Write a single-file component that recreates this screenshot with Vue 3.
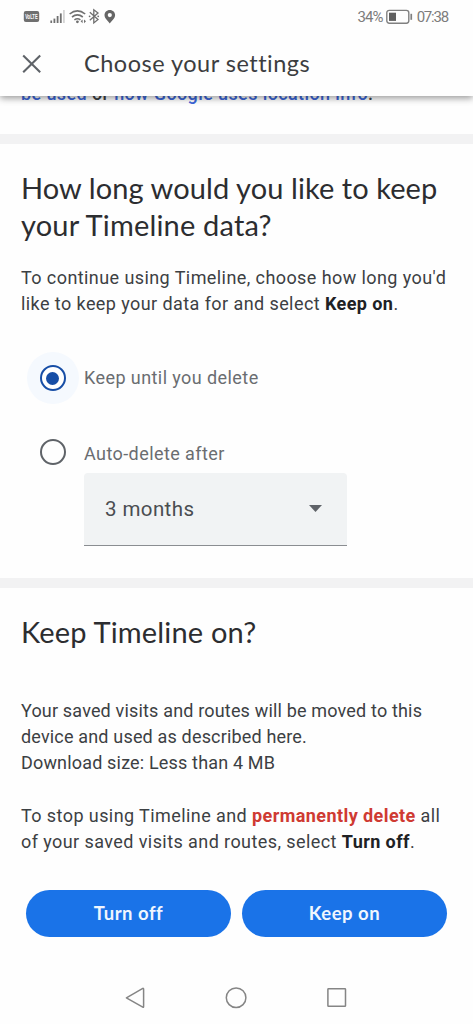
<script setup>
import { ref } from 'vue'

const retention = ref('keep')
</script>

<template>
  <div class="screen">
    <header class="top">
      <div class="status">
        <svg class="status-icons" width="96" height="22" viewBox="0 0 96 22">
          <rect x="1.8" y="5" width="15.4" height="11" rx="2" fill="#707070" />
          <text x="9.4" y="13.4" text-anchor="middle" textLength="12.5" lengthAdjust="spacingAndGlyphs" class="volte">VoLTE</text>
          <g fill="#707070">
            <rect x="28.4" y="14.5" width="1.7" height="2.5" />
            <rect x="31.5" y="12.6" width="1.8" height="4.4" />
            <rect x="34.7" y="10" width="1.8" height="7" />
            <rect x="37.9" y="7.4" width="1.8" height="9.6" />
            <rect x="41" y="4" width="1.8" height="13" fill="#d4d4d4" />
          </g>
          <g fill="none" stroke="#707070" stroke-width="1.6">
            <path d="M47.6 8 Q55.4 1.6 63.2 8" />
            <path d="M50 11 Q55.4 6.8 60.8 11" />
            <path d="M52.4 13.8 Q55.4 11.8 58.4 13.8" />
          </g>
          <circle cx="55.4" cy="15.8" r="1.4" fill="#707070" />
          <path d="M60.6 13.4 L58.6 15.3 L60.6 17.2 Z M62 13.4 L64 15.3 L62 17.2 Z" fill="#707070" />
          <path d="M67.8 6.3 L76 13.6 L71.8 17 V3.8 L76 7 L67.8 14.3" fill="none" stroke="#707070" stroke-width="1.3" />
          <circle cx="67.6" cy="10.3" r="0.9" fill="#707070" />
          <circle cx="76.2" cy="10.3" r="0.9" fill="#707070" />
          <path fill="#666" fill-rule="evenodd" d="M87.8 3.9 C84.6 3.9 82.5 6.2 82.5 9.1 C82.5 12.5 86 15 87.8 17.5 C89.6 15 93.1 12.5 93.1 9.1 C93.1 6.2 91 3.9 87.8 3.9 Z M87.8 7 A2.1 2.1 0 1 1 87.8 11.2 A2.1 2.1 0 1 1 87.8 7 Z" />
        </svg>
        <div class="status-right">
          <span class="pct">34%</span>
          <svg width="27" height="16" viewBox="0 0 27 16">
            <rect x="0.8" y="1.4" width="22" height="12.8" rx="2.4" fill="none" stroke="#808080" stroke-width="1.4" />
            <rect x="3" y="3.7" width="7" height="8.2" fill="#606060" />
            <rect x="24.4" y="4.8" width="1.7" height="6" fill="#808080" />
          </svg>
          <span class="clock">07:38</span>
        </div>
      </div>
      <div class="titlebar">
        <svg class="close" width="20" height="20" viewBox="0 0 20 20">
          <path d="M1.2 1.6 L18.2 18.2 M18.2 1.6 L1.2 18.2" stroke="#5f6368" stroke-width="2.1" fill="none" />
        </svg>
        <h1>Choose your settings</h1>
      </div>
    </header>

    <main>
      <section class="intro">
        <p class="line l0"><a>be used</a> or <a>how Google uses location info</a>.</p>
      </section>

      <section class="timeline">
        <h2><span class="line h-a">How long would you like to keep</span><span class="line h-b">your Timeline data?</span></h2>
        <p class="body">
          <span class="line">To continue using Timeline, choose how long you'd</span>
          <span class="line">like to keep your data for and select <b>Keep on</b>.</span>
        </p>

        <div class="option first" @click="retention = 'keep'">
          <span class="halo" :class="{ active: retention === 'keep' }"><span class="radio"></span></span>
          <span class="label">Keep until you delete</span>
        </div>
        <div class="option second" @click="retention = 'auto'">
          <span class="halo" :class="{ active: retention === 'auto' }"><span class="radio"></span></span>
          <span class="label">Auto-delete after</span>
        </div>
        <div class="select">
          <span>3 months</span>
          <svg width="13" height="7" viewBox="0 0 13 7"><path d="M0 0 H13 L6.5 7 Z" fill="#5f6368" /></svg>
        </div>
      </section>

      <section class="confirm">
        <h2><span class="line h-c">Keep Timeline on?</span></h2>
        <p class="body snug">
          <span class="line">Your saved visits and routes will be moved to this</span>
          <span class="line">device and used as described here.</span>
          <span class="line">Download size: Less than 4 MB</span>
        </p>
        <p class="body">
          <span class="line">To stop using Timeline and <b class="danger">permanently delete</b> all</span>
          <span class="line">of your saved visits and routes, select <b>Turn off</b>.</span>
        </p>
        <div class="actions">
          <button>Turn off</button>
          <button>Keep on</button>
        </div>
      </section>
    </main>

    <nav class="system-nav">
      <svg width="212" height="24" viewBox="0 0 212 24" fill="none" stroke="#858585" stroke-width="1.5" stroke-linejoin="round">
        <path d="M1.4 11.8 L17.8 2.4 Q18.6 2.2 18.6 3.2 V20.6 Q18.6 21.7 17.8 21.2 Z" />
        <circle cx="111.1" cy="11.7" r="9.8" />
        <rect x="202.9" y="2.7" width="17.6" height="17.6" rx="0.6" />
      </svg>
    </nav>
  </div>
</template>

<style>
body {
  margin: 0;
  background: #fefefe;
}
</style>

<style scoped>
.screen {
  width: 473px;
  height: 1024px;
  overflow: hidden;
  display: flex;
  flex-direction: column;
  background: #fefefe;
  color: #3c4043;
  font-family: Roboto, "Liberation Sans", sans-serif;
  font-size: 18px;
  line-height: 26.3px;
}
.top {
  height: 96px;
  flex: none;
  position: relative;
  z-index: 1;
  background: #fefefe;
  box-shadow: 0 2px 7px rgba(0, 0, 0, 0.42);
}
.status {
  display: flex;
  justify-content: space-between;
  padding: 6px 25px 0 22px;
  height: 28px;
  box-sizing: border-box;
}
.volte {
  font: 700 7px "Liberation Sans", sans-serif;
  fill: #fff;
}
.status-right {
  display: flex;
  align-items: center;
  height: 22px;
  font-size: 15px;
  color: #7c7c7c;
}
.status-right svg {
  margin: 0 4px 0 3px;
}
.pct {
  letter-spacing: -0.9px;
}
.clock {
  letter-spacing: -1.2px;
}
.titlebar {
  display: flex;
  align-items: center;
  height: 68px;
  padding-left: 22px;
}
.close {
  margin-top: 4px;
}
h1 {
  margin: 2px 0 0 42px;
  font: 400 23.5px/30px Lato, sans-serif;
  letter-spacing: 0.5px;
  color: #3c3d40;
  white-space: nowrap;
}
p, h2 {
  margin: 0;
}
.line {
  display: block;
  white-space: nowrap;
}
section {
  padding: 0 21px;
}
.intro {
  margin-top: -14.6px;
  height: 52.6px;
}
.l0 {
  font-weight: 500;
  letter-spacing: 0.39px;
}
a {
  color: #3b66d9;
}
.timeline {
  box-sizing: border-box;
  height: 454px;
  padding-top: 26px;
  border-top: 10px solid #f2f2f3;
  border-bottom: 10px solid #f2f2f3;
}
h2 {
  font: 400 29px/36.8px Lato, sans-serif;
  color: #2c2d30;
}
.h-a {
  letter-spacing: 0.08px;
}
.h-b,
.h-c {
  letter-spacing: 0.18px;
}
.body {
  letter-spacing: 0.42px;
}
.body.snug {
  letter-spacing: 0.17px;
}
b {
  font-weight: 700;
  color: #202124;
}
.timeline .body {
  margin-top: 21.5px;
}
.option {
  display: flex;
  align-items: center;
  height: 52px;
  margin-left: 5.5px;
  color: #6a6d71;
  letter-spacing: 0.42px;
}
.first {
  margin-top: 34.8px;
}
.second {
  margin-top: 21.7px;
}
.second .label {
  margin-top: 4px;
}
.halo {
  width: 52px;
  height: 52px;
  border-radius: 50%;
  display: grid;
  place-items: center;
  margin-right: 5.5px;
}
.halo.active {
  background: #f5f9fe;
}
.radio {
  box-sizing: border-box;
  width: 26px;
  height: 26px;
  border: 2.6px solid #5f6368;
  border-radius: 50%;
  display: grid;
  place-items: center;
}
.active .radio {
  border-color: #174ea6;
  background: #fff;
}
.active .radio::after {
  content: "";
  width: 13px;
  height: 13px;
  border-radius: 50%;
  background: #174ea6;
}
.select {
  box-sizing: border-box;
  width: 263px;
  height: 73px;
  margin: -5.2px 0 0 63px;
  padding: 0 25.5px 0 21px;
  display: flex;
  align-items: center;
  justify-content: space-between;
  background: #f1f3f4;
  border-bottom: 1.5px solid #8a8d91;
  border-radius: 4px 4px 0 0;
  font-size: 20.5px;
  letter-spacing: 0.4px;
  color: #4a4d51;
}
.confirm {
  padding-top: 26px;
}
.confirm .body {
  margin-top: 26.3px;
}
.confirm h2 + .body {
  margin-top: 47px;
}
.danger {
  color: #cf3a32;
}
.actions {
  display: flex;
  gap: 11px;
  margin: 34.3px 5px 0;
}
button {
  flex: 1;
  height: 47px;
  border: 0;
  padding: 0;
  border-radius: 24px;
  background: #1a73e8;
  color: #f0f6fe;
  font: 700 18.5px/46px Lato, sans-serif;
  letter-spacing: 0.5px;
}
main {
  flex: 1;
}
.system-nav {
  height: 38px;
  flex: none;
  padding-left: 125.4px;
}
.system-nav svg {
  display: block;
  overflow: visible;
}
</style>
